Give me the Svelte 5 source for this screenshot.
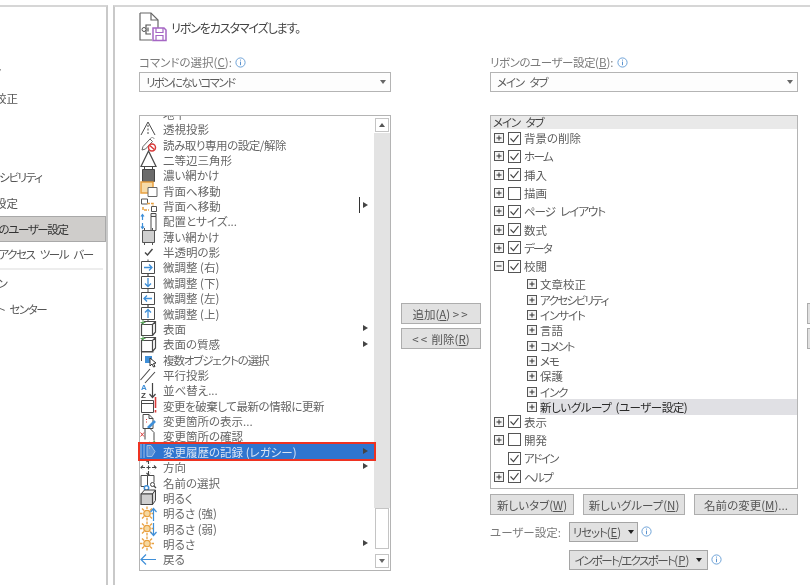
<script>
  // Excel オプション: リボンのユーザー設定
  const navItems = [
    { label: "全般" },
    { label: "数式" },
    { label: "データ", k: "n" },
    { label: "文章校正" },
    { label: "保存" },
    { label: "言語" },
    { label: "アクセシビリティ", k: "n" },
    { label: "詳細設定" },
    { label: "リボンのユーザー設定", k: "n", active: true },
    { label: "クイック アクセス ツール バー", k: "n", rule: true },
    { label: "アドイン", k: "n" },
    { label: "トラスト センター", k: "n" }
  ];

  const K = "#4a4a4a";
  const B = "#3f8fd8";
  const O = "#e8a040";
  const nudge = (arrow) =>
    `<path d="M1.5 2.500h13v12h-13z" fill="#fff" stroke="${K}"/><path d="M8 2.500v-2M8 14.500v2" stroke="${K}"/>${arrow}`;
  const cube = `<path d="M1.500 4.500h11v11h-11zM1.500 4.500l3-3h11v10.500l-3 3.500M12.500 4.500l3-3" fill="none" stroke="${K}" stroke-width="1.200"/><path d="M3 0v5M.5 2.500h5" stroke="#5aa85a"/>`;
  const sun = `<g stroke="${O}" stroke-width="1.300"><circle cx="7" cy="8.500" r="3.200" fill="#f6d8a0"/><path d="M7 1.500v2.500M7 13v2.500M0 8.500h2.500M11.500 8.500h2.500M2 3.500l2 2M10 11.500l2 2M2 13.500l2-2M10 5.500l2-2"/></g>`;

  const icons = {
    horizon: `<path d="M2.500-3h11v5h-11z" fill="#eee" stroke="${K}"/><path d="M4.500 0h1.500M7.500 0h1.500M10.500 0h1.500" stroke="${K}"/>`,
    persp: `<path d="M8 1L1 14M8 1l7 13" fill="none" stroke="${K}"/><path d="M8 4v9" stroke="${K}" stroke-dasharray="2 1.500"/>`,
    readonly: `<path d="M2 14l1-3.500L10 3l2.500 2.500-7 7.500z" fill="#fff" stroke="#666"/><path d="M10 3c1-2 4-2 4 0" fill="none" stroke="#888"/><circle cx="12" cy="11.500" r="3.500" fill="#fff" stroke="#d93b3b" stroke-width="1.500"/><path d="M9.800 9.500l4.500 4" stroke="#d93b3b" stroke-width="1.500"/>`,
    triangle: `<path d="M8.500 0L1 15.500h15z" fill="#fff" stroke="${K}" stroke-width="1.200"/>`,
    dark: `<path d="M2.500 2.500h12v12h-12z" fill="#6b6b6b" stroke="#444"/><path d="M4.500 0v2.500M12.500 0v2.500M4.500 14.500V17M12.500 14.500V17" stroke="#444"/>`,
    back: `<path d="M1 0h12v11H1z" fill="#f7dba8" stroke="${O}" stroke-width="1.500"/><path d="M8 5.500h9v9H8z" fill="#fff" stroke="#666"/>`,
    back2: `<path d="M1.500 1h6v5h-6z" fill="#fff" stroke="#555"/><path d="M7 5.500h6v5M3 9v3h6" fill="none" stroke="${O}" stroke-width="1.500" stroke-dasharray="3 1"/><path d="M11.500 8.500h5v5h-5z" fill="#fff" stroke="#555"/>`,
    arrange: `<path d="M2.500 7V2M1 3.500l1.500-2 1.500 2M2.500 10v5M1 13.500l1.500 2 1.500-2" fill="none" stroke="${B}" stroke-width="1.200"/><path d="M11 3.500h5v14h-5z" fill="#fff" stroke="${K}"/><path d="M11 .5h5v3h-5z" fill="#eee" stroke="${K}"/>`,
    light: `<path d="M2.500 2.500h12v12h-12z" fill="#cfcfcf" stroke="#555"/><path d="M4.500 0v2.500M12.500 0v2.500M4.500 14.500V17M12.500 14.500V17" stroke="#555"/>`,
    check: `<path d="M5 8.500l2.500 2.500 5-6" fill="none" stroke="#444" stroke-width="1.400"/>`,
    right: nudge(`<path d="M4 8.500h8M9 5.500l3 3-3 3" fill="none" stroke="${B}" stroke-width="1.300"/>`),
    down: nudge(`<path d="M8 4v8.500M5 9.500l3 3 3-3" fill="none" stroke="${B}" stroke-width="1.300"/>`),
    left: nudge(`<path d="M12 8.500H4M7 5.500l-3 3 3 3" fill="none" stroke="${B}" stroke-width="1.300"/>`),
    up: nudge(`<path d="M8 13V4.500M5 7.500l3-3 3 3" fill="none" stroke="${B}" stroke-width="1.300"/>`),
    cube,
    multi: `<path d="M1.500 1h12M1.500 1v9" fill="none" stroke="${K}"/><path d="M5 5h7v7H5z" fill="#3f8fd8"/><path d="M10 7l6 5-2.500.5 1.500 3-1.500.5-1.500-3-2 2z" fill="#fff" stroke="#333"/>`,
    parallel: `<path d="M.5 13L10 2M5 16L15 5" stroke="${K}" stroke-width="1.100"/>`,
    sort: `<text x="1" y="7.500" font-size="8" font-weight="700" fill="${B}" font-family="Liberation Sans">A</text><text x="1" y="16" font-size="8" font-weight="700" fill="#444" font-family="Liberation Sans">Z</text><path d="M12.500 1v14M9.500 12l3 3.500 3-3.500" fill="none" stroke="#444" stroke-width="1.200"/>`,
    discard: `<path d="M1.500 3.500h12v12h-12zM1.500 6.500h12" fill="#fff" stroke="${K}"/><path d="M15.500 0v11M15.500 13v2.500" stroke="#d93b3b" stroke-width="1.600"/>`,
    showchg: `<path d="M3 1.500h6l4 4v10H3z" fill="#fff" stroke="${K}"/><path d="M9 1.500v4h4" fill="none" stroke="${K}"/><path d="M6 6.500h1M6 9h1" stroke="#d93b3b"/><path d="M8 15l7-7" stroke="${B}" stroke-width="2.600"/>`,
    review: `<path d="M5 .5h5l4 4v8M5 .5v11" fill="none" stroke="${K}"/><path d="M.5 4.500l3.500 4M4 4.500L.5 8.500" stroke="#d93b3b"/><path d="M9 14l2 2 4-3" fill="none" stroke="#5aa85a" stroke-width="1.300"/>`,
    track: `<path d="M1 1v14M4 1v14" stroke="#9dbfe8"/><path d="M7 2.500h4l4 6-3 5H7z" fill="#5b93d8" stroke="#9dbfe8"/><path d="M9 5h1" stroke="#e8b0a0"/>`,
    move: `<path d="M8.500 1v15M1 8.500h15M6.500 3l2-2 2 2M6.500 14l2 2 2-2M3 6.500l-2 2 2 2M14 6.500l2 2-2 2" fill="none" stroke="#444" stroke-width="1.100" stroke-dasharray="4 1.500"/>`,
    name: `<path d="M1 1.500h6.500v11H1zM7.500 1.500H14v7" fill="#fff" stroke="${K}"/><circle cx="6.500" cy="14" r="2.200" fill="#fff" stroke="${B}" stroke-width="1.500"/><circle cx="12.500" cy="10.500" r="2" fill="#fff" stroke="#444"/><path d="M14 12l2 2" stroke="#444" stroke-width="1.200"/>`,
    bright: `<path d="M4.500 1h11l-3 4H1z" fill="#efefef" stroke="#444"/><path d="M12.500 5l3-4v10.500l-3 4z" fill="#e4e4e4" stroke="#444"/><path d="M1 5h11.500v10.500H1z" fill="#cfcfcf" stroke="#444" stroke-width="1.200"/>`,
    sunup: `${sun}<path d="M13.500 16V4M10.500 7l3-3.500 3 3.500" fill="none" stroke="${B}" stroke-width="1.200"/>`,
    sundown: `${sun}<path d="M13.500 3v12M10.500 12l3 3.500 3-3.500" fill="none" stroke="${B}" stroke-width="1.200"/>`,
    sun,
    undo: `<path d="M1 8.500h15M6 3.500l-5 5 5 5" fill="none" stroke="${B}" stroke-width="1.200"/>`,
    last: `<path d="M8 15l3 2H8z" fill="#444"/>`
  };

  const commands = [
    { t: "地平", i: "horizon" },
    { t: "透視投影", i: "persp" },
    { t: "読み取り専用の設定/解除", i: "readonly", k: "c" },
    { t: "二等辺三角形", i: "triangle" },
    { t: "濃い網かけ", i: "dark" },
    { t: "背面へ移動", i: "back" },
    { t: "背面へ移動", i: "back2", bar: true },
    { t: "配置とサイズ...", i: "arrange" },
    { t: "薄い網かけ", i: "light" },
    { t: "半透明の影", i: "check" },
    { t: "微調整 (右)", i: "right" },
    { t: "微調整 (下)", i: "down" },
    { t: "微調整 (左)", i: "left" },
    { t: "微調整 (上)", i: "up" },
    { t: "表面", i: "cube", sub: true },
    { t: "表面の質感", i: "cube", sub: true },
    { t: "複数オブジェクトの選択", i: "multi", k: "b" },
    { t: "平行投影", i: "parallel" },
    { t: "並べ替え...", i: "sort" },
    { t: "変更を破棄して最新の情報に更新", i: "discard", k: "c" },
    { t: "変更箇所の表示...", i: "showchg" },
    { t: "変更箇所の確認", i: "review" },
    { t: "変更履歴の記録 (レガシー)", i: "track", sub: true, selected: true },
    { t: "方向", i: "move", sub: true },
    { t: "名前の選択", i: "name" },
    { t: "明るく", i: "bright" },
    { t: "明るさ (強)", i: "sunup" },
    { t: "明るさ (弱)", i: "sundown" },
    { t: "明るさ", i: "sun", sub: true },
    { t: "戻る", i: "undo" },
    { t: "ちらし", i: "last" }
  ];

  const tabsBefore = [
    { t: "背景の削除", c: true },
    { t: "ホーム", c: true, k: "a" },
    { t: "挿入", c: true },
    { t: "描画", c: false },
    { t: "ページ レイアウト", c: true, k: "b" },
    { t: "数式", c: true },
    { t: "データ", c: true, k: "a" }
  ];
  const groups = [
    { t: "文章校正" },
    { t: "アクセシビリティ", k: "a" },
    { t: "インサイト", k: "b" },
    { t: "言語" },
    { t: "コメント", k: "a" },
    { t: "メモ", k: "b" },
    { t: "保護" },
    { t: "インク", k: "b" }
  ];
  const tabsAfter = [
    { t: "表示", c: true, exp: true },
    { t: "開発", c: false, exp: true },
    { t: "アドイン", c: true, exp: false, k: "a" },
    { t: "ヘルプ", c: true, exp: true, k: "a" }
  ];
</script>

{#snippet info()}
  <svg class="info" width="11" height="11" viewBox="0 0 11 11">
    <circle cx="5.5" cy="5.5" r="4.6" fill="#fff" stroke="#6fa3d8" />
    <path d="M5.5 2.600v1M5.500 4.600v3.600" stroke="#5b93cf" />
  </svg>
{/snippet}

{#snippet expander(open)}
  <svg class="exp" width="10" height="10" viewBox="0 0 10 10">
    <rect x="0.5" y="0.5" width="9" height="9" fill="#f4f4f4" stroke="#555" />
    <path d={open ? "M2.500 5h5" : "M2.500 5h5M5 2.500v5"} stroke="#333" />
  </svg>
{/snippet}

{#snippet checkbox(on)}
  <svg class="chk" width="13" height="13" viewBox="0 0 13 13">
    <rect x="0.5" y="0.5" width="12" height="12" fill="#fff" stroke="#555" />
    {#if on}<path d="M2.500 6.500l3 3.200 5-6.500" fill="none" stroke="#444" stroke-width="1.100" />{/if}
  </svg>
{/snippet}

<div class="page">
  <nav class="nav">
    <ul>
      {#each navItems as item}
        <li class:active={item.active} class:rule={item.rule}><span class="k{item.k ?? ''}">{item.label}</span></li>
      {/each}
    </ul>
  </nav>

  <main class="main">
    <header class="head">
      <svg width="28" height="30" viewBox="0 0 28 30">
        <path d="M1 1h11l7 7v8M1 1v27h12" fill="none" stroke="#666" stroke-width="1.200" />
        <path d="M12 1v7h7" fill="none" stroke="#666" stroke-width="1.200" />
        <path d="M12 13H7v9h5M7 17.500H4M9 15.500v4" fill="none" stroke="#555" stroke-width="1.200" />
        <circle cx="5" cy="17.500" r="2" fill="#fff" stroke="#555" />
        <path d="M14 16h11l2 2v10.500H14z" fill="#fff" stroke="#a566c4" stroke-width="1.500" />
        <path d="M17 16v4.500h7V16M17 28v-4.500h7V28" fill="none" stroke="#a566c4" stroke-width="1.200" />
      </svg>
      <span class="kb">リボンをカスタマイズします。</span>
    </header>

    <div class="cols">
      <section class="col">
        <div class="label">コマンドの選択(<u>C</u>):{@render info()}</div>
        <div class="select"><span class="ka">リボンにないコマンド</span><i class="tri"></i></div>
        <div class="list">
          <div class="rows">
            {#each commands as c}
              <div class="row" class:selected={c.selected}>
                <svg class="ico" width="17" height="17" viewBox="0 0 17 17">{@html icons[c.i]}</svg>
                <span class="txt k{c.k ?? ''}">{c.t}</span>
                {#if c.bar}<i class="bar"></i>{/if}
                {#if c.sub || c.bar}<i class="sub"></i>{/if}
              </div>
            {/each}
          </div>
          <div class="scroll">
            <div class="sbtn"><i class="up"></i></div>
            <div class="track"></div>
            <div class="thumb"></div>
            <div class="sbtn"><i class="tri"></i></div>
          </div>
        </div>
      </section>

      <div class="mid">
        <button>追加(<u>A</u>) <span class="gt">&gt;&gt;</span></button>
        <button><span class="gt">&lt;&lt;</span> 削除(<u>R</u>)</button>
      </div>

      <section class="col">
        <div class="label"><span class="kc">リボンのユーザー設定</span>(<u>B</u>):{@render info()}</div>
        <div class="select"><span class="kb">メイン タブ</span><i class="tri"></i></div>
        <div class="tree">
          <div class="tree-head kb">メイン タブ</div>
          {#each tabsBefore as tab}
            <div class="tab">{@render expander(false)}{@render checkbox(tab.c)}<span class="k{tab.k ?? ''}">{tab.t}</span></div>
          {/each}
          <div class="tab">{@render expander(true)}{@render checkbox(true)}<span>校閲</span></div>
          <div class="kids">
            {#each groups as g}
              <div class="kid">{@render expander(false)}<span class="k{g.k ?? ''}">{g.t}</span></div>
            {/each}
            <div class="kid current">{@render expander(false)}<span class="kc">新しいグループ (ユーザー設定)</span></div>
          </div>
          {#each tabsAfter as tab}
            <div class="tab">
              {#if tab.exp}{@render expander(false)}{:else}<i class="exp-gap"></i>{/if}
              {@render checkbox(tab.c)}<span class="k{tab.k ?? ''}">{tab.t}</span>
            </div>
          {/each}
        </div>
        <div class="actions">
          <button class="w84">新しいタブ(<u>W</u>)</button>
          <button class="w102">新しいグループ(<u>N</u>)</button>
          <button class="w104">名前の変更(<u>M</u>)...</button>
        </div>
        <div class="custom">
          <span class="custom-label">ユーザー設定:</span>
          <button class="drop w69"><span class="kb">リセット</span>(<u>E</u>)<i class="tri dark"></i></button>
          {@render info()}
        </div>
        <div class="custom second">
          <button class="drop w139"><span class="ka">インポート/エクスポート</span>(<u>P</u>)<i class="tri dark"></i></button>
          {@render info()}
        </div>
      </section>

      <div class="updown">
        <button></button>
        <button></button>
      </div>
    </div>
  </main>
</div>

<style>
  :global(body) {
    margin: 0;
    background: #fff;
  }
  .page {
    width: 810px;
    height: 585px;
    display: flex;
    overflow: hidden;
    background: #fff;
    color: #5c5c5c;
    font-family: "Noto Sans CJK JP", "Noto Sans", sans-serif;
    font-size: 11.5px;
    font-feature-settings: "palt";
    filter: blur(0.4px);
  }
  button,
  u,
  i {
    font: inherit;
  }
  i {
    display: block;
  }
  .ka { letter-spacing: -1.6px; word-spacing: 4px; }
  .kb { letter-spacing: -1.1px; word-spacing: 4px; }
  .kc { letter-spacing: -0.45px; word-spacing: 2px; }
  .kn { letter-spacing: -1.4px; word-spacing: 4px; }

  /* 左のカテゴリ: 左端が切れている */
  .nav {
    width: 106px;
    flex: none;
    margin-top: 5px;
    border-top: 2px solid #d6d6d6;
    border-right: 2px solid #c9c9c9;
    overflow: hidden;
  }
  .nav ul {
    list-style: none;
    margin: 0;
    padding: 0;
  }
  .nav li {
    height: 26.1px;
    display: flex;
    align-items: center;
    white-space: nowrap;
    box-sizing: border-box;
    color: #555;
  }
  .nav li span {
    margin-left: -28px;
  }
  .nav li.active {
    background: #cfcdcb;
    border: 1px solid #a9a9a9;
    border-left: 0;
    color: #333;
  }
  .nav li.rule {
    height: 28px;
    padding-bottom: 2px;
    border-bottom: 2px solid #ededed;
    margin-right: 3px;
  }
  .nav li.rule span {
    margin-left: -41px;
  }

  .main {
    flex: 1;
    min-width: 0;
    margin: 5px 0 0 5px;
    padding-left: 24px;
    border-top: 2px solid #d6d6d6;
    border-left: 2px solid #c9c9c9;
  }
  .head {
    display: flex;
    align-items: center;
    gap: 4px;
    padding-top: 5px;
    height: 30px;
    color: #444;
    font-size: 12px;
  }
  .cols {
    display: grid;
    grid-template-columns: 252px 99px 308px 40px;
    margin-top: 11px;
  }
  .col {
    min-width: 0;
  }
  .label {
    display: flex;
    align-items: center;
    height: 16px;
    box-sizing: border-box;
    padding-top: 2px;
    color: #7b7b7b;
    white-space: nowrap;
  }
  .info {
    margin-left: 3px;
    flex: none;
  }
  .select {
    height: 20px;
    margin-top: 3px;
    box-sizing: border-box;
    display: flex;
    align-items: center;
    justify-content: space-between;
    padding: 0 4px 0 6px;
    border: 1px solid #b4b4b4;
    background: #fdfdfd;
  }
  .tri {
    width: 0;
    height: 0;
    border: 3.5px solid transparent;
    border-top: 4px solid #666;
    border-bottom: 0;
  }
  .tri.dark {
    border-top-color: #222;
    margin-left: 7px;
  }

  /* コマンド一覧 */
  .list {
    height: 456px;
    margin-top: 23px;
    box-sizing: border-box;
    display: flex;
    border: 1px solid #b4b4b4;
    background: #fff;
  }
  .rows {
    flex: 1;
    min-width: 0;
    margin-top: -9.800px;
    clip-path: inset(9.800px -4px 0 -4px);
    height: calc(100% + 9.800px);
  }
  .row {
    height: 15.36px;
    display: flex;
    align-items: center;
    position: relative;
    white-space: nowrap;
    color: #666;
  }
  .ico {
    flex: none;
    overflow: visible;
  }
  .txt {
    margin-left: 6px;
  }
  .row.selected {
    background: #2f75cf;
    color: #d8e4f4;
    outline: 2px solid #ee3322;
    z-index: 1;
  }
  .bar {
    position: absolute;
    left: 219px;
    top: -1px;
    width: 1px;
    height: 16px;
    background: #333;
  }
  .sub {
    position: absolute;
    left: 223px;
    top: 4px;
    width: 0;
    height: 0;
    border: 3.5px solid transparent;
    border-left: 5px solid #444;
    border-right: 0;
  }
  .scroll {
    width: 16px;
    flex: none;
    display: flex;
    flex-direction: column;
    padding: 1px 0 1px;
    background: #fff;
  }
  .track {
    flex: 1;
    background: #e3e3e3;
  }
  .sbtn {
    height: 14px;
    margin: 1px 1px;
    box-sizing: border-box;
    border: 1px solid #c4c4c4;
    background: #fff;
    display: flex;
    align-items: center;
    justify-content: center;
  }
  .scroll .up {
    width: 0;
    height: 0;
    border: 3.500px solid transparent;
    border-bottom: 4px solid #555;
    border-top: 0;
  }
  .thumb {
    height: 41px;
    margin: 0 1px 4px;
    box-sizing: border-box;
    border: 1px solid #c4c4c4;
    background: #fff;
  }

  button {
    box-sizing: border-box;
    height: 21px;
    padding: 0;
    border: 1px solid #adadad;
    background: #e1e1e1;
    color: #555;
    white-space: nowrap;
  }
  .gt {
    letter-spacing: 2px;
  }
  .mid,
  .updown {
    display: flex;
    flex-direction: column;
    gap: 4px;
    padding-top: 250px;
  }
  .mid {
    padding-left: 10px;
  }
  .mid button {
    width: 80px;
  }
  .updown {
    padding-left: 9px;
  }
  .updown button {
    width: 20px;
  }

  /* リボンのタブ */
  .tree {
    height: 374px;
    margin-top: 23px;
    box-sizing: border-box;
    border: 1px solid #b4b4b4;
    overflow: hidden;
  }
  .tree-head {
    height: 13px;
    line-height: 13px;
    padding-left: 2px;
    background: #e9e9e9;
    color: #444;
  }
  .tab {
    height: 18.3px;
    display: flex;
    align-items: center;
    padding-left: 3px;
  }
  .chk {
    margin-left: 4px;
    flex: none;
  }
  .exp {
    flex: none;
  }
  .exp-gap {
    width: 10px;
    flex: none;
  }
  .tab span {
    margin-left: 3px;
  }
  .kids {
    padding-top: 1.200px;
    margin-bottom: -2.300px;
  }
  .kid {
    height: 15.36px;
    display: flex;
    align-items: center;
    padding-left: 36px;
  }
  .kid span {
    flex: 1;
    margin-left: 3px;
    height: 100%;
    display: flex;
    align-items: center;
    white-space: pre;
  }
  .kid.current span {
    background: #e0e0e4;
    color: #2a2a2a;
  }
  .actions {
    display: flex;
    justify-content: space-between;
    margin-top: 5px;
  }
  .w84 { width: 84px; }
  .w102 { width: 102px; }
  .w104 { width: 104px; }
  .w69 { width: 69px; }
  .w139 { width: 139px; }
  .custom {
    display: flex;
    align-items: center;
    margin-top: 7px;
    height: 20px;
  }
  .custom.second {
    margin-top: 8px;
    padding-left: 79px;
  }
  .custom-label {
    width: 79px;
    flex: none;
    color: #7b7b7b;
  }
  .drop {
    height: 20px;
    flex: none;
    display: flex;
    align-items: center;
    justify-content: center;
    border-color: #a5a5a5;
  }
  .custom .info {
    margin-left: 3px;
    margin-top: -2px;
  }
</style>
